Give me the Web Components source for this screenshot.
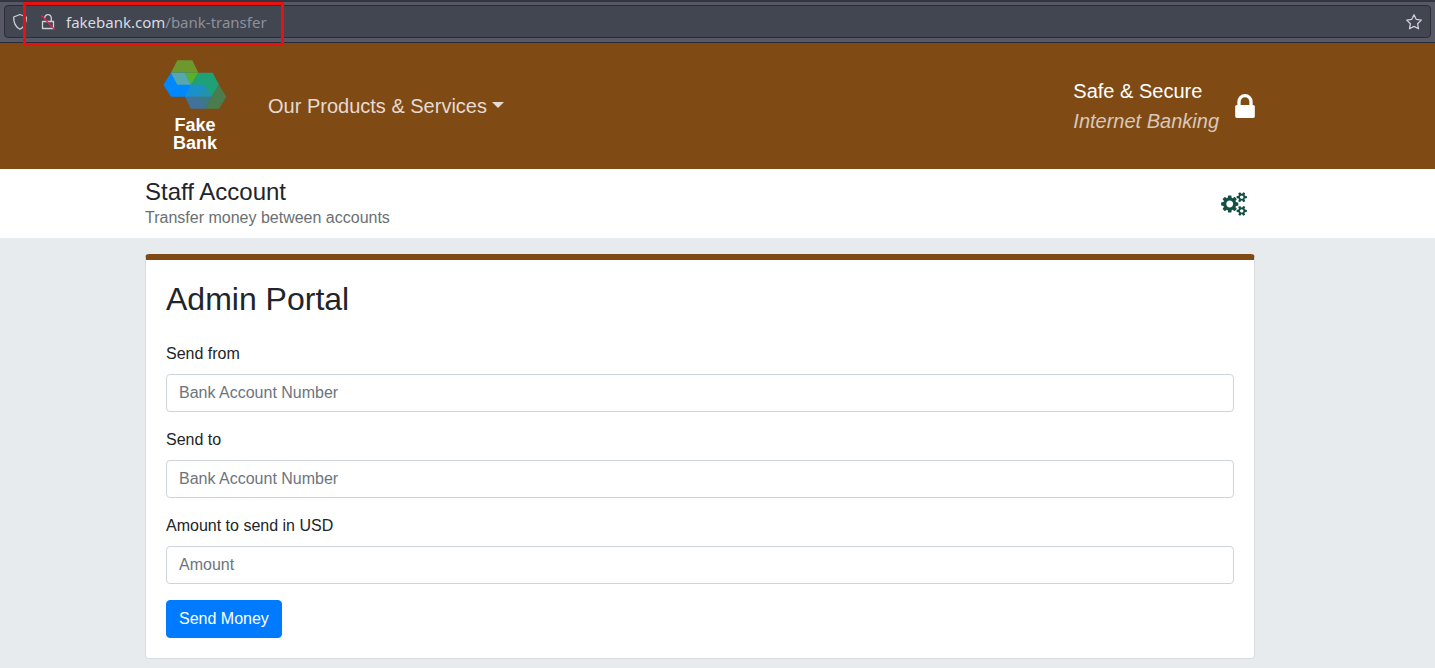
<!DOCTYPE html>
<html lang="en">
<head>
<meta charset="utf-8">
<title>Fake Bank - Transfer</title>
<style>
  html { background: #e7ebee; }
  body { margin: 0; font: 16px/24px "Liberation Sans", Arial, sans-serif; color: #212529; background: #e7ebee; }
</style>
</head>
<body>
<bank-app></bank-app>

<script>
function define(name, html) {
  const template = document.createElement('template');
  template.innerHTML = html;
  customElements.define(name, class extends HTMLElement {
    constructor() {
      super();
      this.attachShadow({ mode: 'open' }).append(template.content.cloneNode(true));
      this.ready?.();
    }
  });
}

define('browser-bar', `
<style>
  :host { display: block; position: relative; box-sizing: border-box; padding: 3px 4px 4px; background: #565866;
    border-top: 2px solid #33353f; border-bottom: 1px solid #2b2c38; }
  .field { display: flex; align-items: center; box-sizing: border-box; height: 33px; padding: 0 7px;
    background: #414650; border: 1px solid #2b2e38; border-radius: 4px; }
  svg { display: block; flex: none; fill: none; stroke: #cfd1d8; stroke-width: 1.3; stroke-linejoin: round; }
  .lock { margin: 0 10px 0 12px; }
  .url { flex: 1; font: 15px/24px "Noto Sans", sans-serif; color: #dadce2; }
  .path { color: #8e919b; }
  button { padding: 0; border: 0; background: none; }
  .mark { position: absolute; left: 23px; top: 0; width: 255px; height: 38px; border: 3px solid #ea1010; }
</style>
<div class="field">
  <svg width="16" height="18" viewBox="0 0 16 18"><path d="M8 1.5 14.3 4C14.5 9 13 13.5 8 16.3 3 13.500 1.500 9 1.700 4Z"/></svg>
  <svg class="lock" width="16" height="18" viewBox="0 0 16 18"><path d="M2.500 8.500h11v7h-11zM4.700 5.500C4.500 .2 11.500 .2 11.300 5.500v3"/><path d="M1.500 2.500 14.500 16.500" stroke="#e32650"/></svg>
  <span class="url">fakebank.com<span class="path">/bank-transfer</span></span>
  <button aria-label="Bookmark this page"><svg width="18" height="18" viewBox="0 0 18 18"><path d="M9 1.800 11.200 6.300 16.300 7.100 12.600 10.700 13.500 15.800 9 13.400 4.500 15.800 5.400 10.700 1.700 7.100 6.800 6.300Z"/></svg></button>
</div>
<div class="mark"></div>`);

define('page-container', `
<style>
  :host { display: block; padding: 0 50px 0 15px; }
  div { max-width: 1110px; margin: 0 auto; }
</style>
<div><slot></slot></div>`);

define('bank-logo', `
<style>
  :host { display: flex; flex-direction: column; align-items: center; width: 64px; font-size: 18px; line-height: 18px; font-weight: bold; color: #fff; text-align: center; }
  svg { display: block; margin-bottom: 6px; }
</style>
<svg width="64" height="50" viewBox="54 32 192 150">
  <path fill="#6c982e" d="M97 33H142L160 70H78Z"/>
  <path fill="#0088ff" d="M78 70 55 106 78 142H137L157 106 137 70Z"/>
  <path fill="#1fa178" d="M160 70H203L222 106 200 142H160L137 106Z"/>
  <path fill="#56b22b" d="M120 70H160L137 106Z"/>
  <path fill="#56a8ad" d="M78 70H120L137 106H97Z"/>
  <path fill="#427199" d="M120 142H200L181 178H137Z"/>
  <path fill="#1b91cc" d="M137 106H181L160 142H120Z"/>
  <path fill="#2392ae" d="M181 106 200 142H160Z"/>
  <path fill="#3b7888" d="M160 142H200L181 178Z"/>
  <path fill="#4b7c4d" d="M222 106 244 142 222 178H181L200 142Z"/>
</svg>
<span>Fake</span><span>Bank</span>`);

define('bank-header', `
<style>
  :host { display: block; background: #804a15; color: #fff; font-size: 20px; line-height: 30px; }
  .row { display: flex; align-items: center; min-height: 126px; }
  bank-logo { margin: 0 41px 0 18px; }
  a { flex: 1; color: #e6dbd0; text-decoration: none; }
  a::after { content: ""; display: inline-block; margin-left: 5px; vertical-align: 5px; border: 6px solid transparent; border-top-color: currentColor; border-bottom: 0; }
  em { display: block; color: #d9c8b9; }
  svg { display: block; margin-left: 16px; fill: #fff; }
</style>
<page-container><div class="row">
  <bank-logo></bank-logo>
  <a href="#">Our Products &amp; Services</a>
  <div>Safe &amp; Secure<em>Internet Banking</em></div>
  <svg width="20" height="24" viewBox="0 128 1152 1408"><path d="M320 768h512v-192q0-106-75-181t-181-75-181 75-75 181v192zm832 96v576q0 40-28 68t-68 28h-960q-40 0-68-28t-28-68v-576q0-40 28-68t68-28h32v-192q0-184 132-316t316-132 316 132 132 316v192h32q40 0 68 28t28 68z"/></svg>
</div></page-container>`);

define('account-bar', `
<style>
  :host { display: block; background: #fff; }
  .row { display: flex; align-items: center; justify-content: space-between; padding: 8px 8px 8px 0; }
  h1 { margin: 0; font-size: 24px; line-height: 29px; font-weight: normal; }
  p { margin: 0; color: #6c757d; color: #6b6f72; }
  svg { display: block; fill: #135043; }
</style>
<page-container><div class="row">
  <div><h1>Staff Account</h1><p>Transfer money between accounts</p></div>
  <svg width="26" height="24" viewBox="0 0 1920 1792"><path d="M896 896q0-106-75-181t-181-75-181 75-75 181 75 181 181 75 181-75 75-181zm768 512q0-52-38-90t-90-38-90 38-38 90q0 53 37.500 90.500t90.500 37.500 90.500-37.500 37.500-90.500zm0-1024q0-52-38-90t-90-38-90 38-38 90q0 53 37.500 90.500t90.500 37.500 90.500-37.500 37.500-90.500zm-384 421v185q0 10-7 19.500t-16 10.500l-155 24q-11 35-32 76 34 48 90 115 7 11 7 20 0 12-7 19-23 30-82.500 89.500t-78.500 59.500q-11 0-21-7l-115-90q-37 19-77 31-11 108-23 155-7 24-30 24h-186q-11 0-20-7.500t-10-17.500l-23-153q-34-10-75-31l-118 89q-7 7-20 7-11 0-21-8-144-133-144-160 0-9 7-19 10-14 41-53t47-61q-23-44-35-82l-152-24q-10-1-17-9.500t-7-19.500v-185q0-10 7-19.500t16-10.500l155-24q11-35 32-76-34-48-90-115-7-11-7-20 0-12 7-20 22-30 82-89t79-59q11 0 21 7l115 90q34-18 77-32 11-108 23-154 7-24 30-24h186q11 0 20 7.500t10 17.500l23 153q34 10 75 31l118-89q8-7 20-7 11 0 21 8 144 133 144 160 0 8-7 19-12 16-42 54t-45 60q23 48 34 82l152 23q10 2 17 10.500t7 19.500zm640 533v140q0 16-149 31-12 27-30 52 51 113 51 138 0 4-4 7-122 71-124 71-8 0-46-47t-52-68q-20 2-30 2t-30-2q-14 21-52 68t-46 47q-2 0-124-71-4-3-4-7 0-25 51-138-18-25-30-52-149-15-149-31v-140q0-16 149-31 13-29 30-52-51-113-51-138 0-4 4-7 4-2 35-20t59-34 30-16q8 0 46 46.500t52 67.500q20-2 30-2t30 2q51-71 92-112l6-2q4 0 124 70 4 3 4 7 0 25-51 138 17 23 30 52 149 15 149 31zm0-1024v140q0 16-149 31-12 27-30 52 51 113 51 138 0 4-4 7-122 71-124 71-8 0-46-47t-52-68q-20 2-30 2t-30-2q-14 21-52 68t-46 47q-2 0-124-71-4-3-4-7 0-25 51-138-18-25-30-52-149-15-149-31v-140q0-16 149-31 13-29 30-52-51-113-51-138 0-4 4-7 4-2 35-20t59-34 30-16q8 0 46 46.500t52 67.500q20-2 30-2t30 2q51-71 92-112l6-2q4 0 124 70 4 3 4 7 0 25-51 138 17 23 30 52 149 15 149 31z"/></svg>
</div></page-container>`);

const fieldTemplate = document.createElement('template');
fieldTemplate.innerHTML = `
<style>
  :host { display: block; margin-bottom: 16px; }
  label { display: block; margin-bottom: 8px; }
  input { display: block; box-sizing: border-box; width: 100%; height: 38px; padding: 6px 12px; font: inherit; color: #495057;
    background: #fff; border: 1px solid #ced4da; border-radius: 4px; }
  input::placeholder { color: #6c757d; opacity: 1; }
</style>
<label for="field"></label><input id="field" type="text">`;
customElements.define('form-field', class extends HTMLElement {
  constructor() {
    super();
    this.attachShadow({ mode: 'open' }).append(fieldTemplate.content.cloneNode(true));
  }
  connectedCallback() {
    this.shadowRoot.querySelector('label').textContent = this.getAttribute('label');
    this.shadowRoot.querySelector('input').placeholder = this.getAttribute('placeholder');
  }
});

define('transfer-card', `
<style>
  :host { display: block; box-sizing: border-box; padding: 20px; background: #fff; border: 1px solid #dadddf; border-top: 6px solid #804a15; border-radius: 4px; }
  h2 { margin: 0 0 24px; font-size: 32px; line-height: 38px; font-weight: normal; }
  button { display: block; height: 38px; padding: 6px 12px; font: inherit; color: #fff; background: #007bff; border: 1px solid #007bff; border-radius: 4px; }
</style>
<h2>Admin Portal</h2>
<form>
  <form-field label="Send from" placeholder="Bank Account Number"></form-field>
  <form-field label="Send to" placeholder="Bank Account Number"></form-field>
  <form-field label="Amount to send in USD" placeholder="Amount"></form-field>
  <button type="button">Send Money</button>
</form>`);

define('bank-app', `
<style>
  :host { display: block; }
  main { padding: 16px 0 9px; }
</style>
<browser-bar></browser-bar>
<bank-header></bank-header>
<account-bar></account-bar>
<main><page-container><transfer-card></transfer-card></page-container></main>`);
</script>
</body>
</html>
